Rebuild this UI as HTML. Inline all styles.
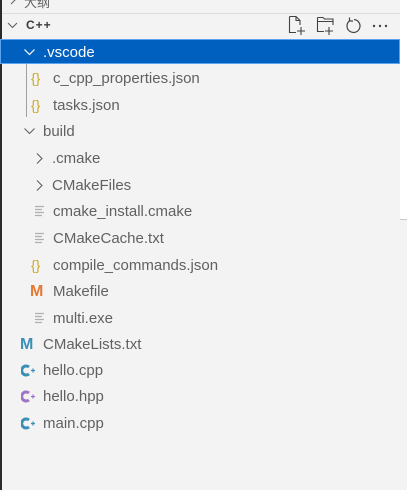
<!DOCTYPE html>
<html><head><meta charset="utf-8"><style>
*{margin:0;padding:0;box-sizing:border-box}
body{width:407px;height:490px;overflow:hidden;background:#f3f3f3;position:relative;font-family:"Segoe UI","Liberation Sans","Noto Sans CJK SC",sans-serif;color:#616161}
.r{position:absolute;left:0;width:400px;height:26px;font-size:15px;line-height:26px;white-space:nowrap}
.t{position:absolute;top:2px}
.ic{position:absolute;top:1px;font-size:14px;font-weight:normal}
svg{position:absolute}
</style></head><body>
<div style="position:absolute;left:0;top:0;width:2px;height:490px;background:#2b2b2b"></div>
<div style="position:absolute;left:400px;top:0;width:7px;height:219px;background:#fff"></div>
<div style="position:absolute;left:400px;top:219px;width:7px;height:1px;background:#c8c8c8"></div>
<div style="position:absolute;left:2px;top:13px;width:398px;height:1px;background:#dcdcdc"></div>
<div style="position:absolute;left:24px;top:-8px;font-size:13px;color:#616161">大纲</div>
<svg style="left:8px;top:-4px" width="12" height="10"><path d="M3 8 L8 3" stroke="#616161" fill="none"/></svg>
<svg style="left:7px;top:21px" width="12" height="10"><path d="M1 2 L5.5 6.5 L10 2" stroke="#616161" fill="none" stroke-width="1.1"/></svg>
<div style="position:absolute;left:26px;top:18px;font-size:12px;font-weight:bold;color:#3b3b3b;letter-spacing:1px">C++</div>
<svg style="left:288px;top:15px" width="20" height="22" fill="none" stroke="#424242" stroke-width="1.1"><path d="M1.5 1.5 H8 L12 5.5 V10 M8 1.5 V5.5 H12 M1.5 1.5 V17.5 H8"/><path d="M13 12 V20 M9 16 H17"/></svg>
<svg style="left:316px;top:15px" width="20" height="22" fill="none" stroke="#424242" stroke-width="1.1"><path d="M1.5 2.5 H7 L8.5 4 H17 V10 M1.5 2.5 V16.5 H8 M1.5 6.5 H17"/><path d="M13 12 V20 M9 16 H17"/></svg>
<svg style="left:345px;top:17px" width="18" height="18" fill="none" stroke="#424242" stroke-width="1.2"><path d="M5 3.5 A6.5 6.5 0 1 0 9 2.5"/><path d="M4.5 0.5 V4 H8"/></svg>
<svg style="left:372px;top:24px" width="18" height="4" fill="#424242"><circle cx="2" cy="2" r="1.2"/><circle cx="8" cy="2" r="1.2"/><circle cx="14" cy="2" r="1.2"/></svg>
<div class="r" style="top:39px;height:25px;background:#0060c0;border:1px solid #5aa3f0;color:#fff">
<svg style="left:22px;top:8px" width="14" height="10"><path d="M1.5 1.5 L6.5 6.5 L11.5 1.5" stroke="#fff" fill="none" stroke-width="1.2"/></svg>
<span class="t" style="left:42px;top:0px">.vscode</span></div>
<div style="position:absolute;left:26px;top:64px;width:1px;height:53px;background:#a0a0a0"></div>
<div class="r" style="top:64px"><span class="ic" style="left:31px;color:#c9a826">{}</span><span class="t" style="left:53px">c_cpp_properties.json</span></div>
<div class="r" style="top:91px"><span class="ic" style="left:31px;color:#c9a826">{}</span><span class="t" style="left:53px">tasks.json</span></div>
<div class="r" style="top:117px"><svg style="left:23px;top:10px" width="14" height="10"><path d="M1.5 1.5 L6.5 6.5 L11.5 1.5" stroke="#616161" fill="none" stroke-width="1.1"/></svg><span class="t" style="left:43px">build</span></div>
<div class="r" style="top:144px"><svg style="left:35px;top:8px" width="10" height="14"><path d="M2 1.5 L7 6.5 L2 11.5" stroke="#616161" fill="none" stroke-width="1.1"/></svg><span class="t" style="left:52px">.cmake</span></div>
<div class="r" style="top:171px"><svg style="left:35px;top:8px" width="10" height="14"><path d="M2 1.5 L7 6.5 L2 11.5" stroke="#616161" fill="none" stroke-width="1.1"/></svg><span class="t" style="left:52px">CMakeFiles</span></div>
<div class="r" style="top:197px"><svg style="left:34px;top:8px" width="12" height="12" stroke="#b0b0b0" stroke-width="1.2"><path d="M1 1.5H10M1 4.5H8M1 7.5H10M1 10.5H8"/></svg><span class="t" style="left:53px">cmake_install.cmake</span></div>
<div class="r" style="top:224px"><svg style="left:34px;top:8px" width="12" height="12" stroke="#b0b0b0" stroke-width="1.2"><path d="M1 1.5H10M1 4.5H8M1 7.5H10M1 10.5H8"/></svg><span class="t" style="left:53px">CMakeCache.txt</span></div>
<div class="r" style="top:251px"><span class="ic" style="left:31px;color:#c9a826">{}</span><span class="t" style="left:53px">compile_commands.json</span></div>
<div class="r" style="top:277px"><span class="ic" style="left:30px;top:2px;color:#e37933;font-size:16px;font-weight:900">M</span><span class="t" style="left:53px">Makefile</span></div>
<div class="r" style="top:304px"><svg style="left:34px;top:8px" width="12" height="12" stroke="#b0b0b0" stroke-width="1.2"><path d="M1 1.5H10M1 4.5H8M1 7.5H10M1 10.5H8"/></svg><span class="t" style="left:53px">multi.exe</span></div>
<div class="r" style="top:330px"><span class="ic" style="left:20px;top:2px;color:#3b8eb5;font-size:16px;font-weight:900">M</span><span class="t" style="left:43px">CMakeLists.txt</span></div>
<div class="r" style="top:356px"><svg style="left:21px;top:8px" width="16" height="13"><path d="M8 3 A4.5 4.5 0 1 0 8 10" stroke="#3b8eb5" stroke-width="3" fill="none"/><path d="M10 6.5h4M12 4.5v4" stroke="#3b8eb5" stroke-width="1.2"/></svg><span class="t" style="left:43px">hello.cpp</span></div>
<div class="r" style="top:382px"><svg style="left:21px;top:8px" width="16" height="13"><path d="M8 3 A4.5 4.5 0 1 0 8 10" stroke="#a074c4" stroke-width="3" fill="none"/><path d="M10 6.5h4M12 4.5v4" stroke="#a074c4" stroke-width="1.2"/></svg><span class="t" style="left:43px">hello.hpp</span></div>
<div class="r" style="top:409px"><svg style="left:21px;top:8px" width="16" height="13"><path d="M8 3 A4.5 4.5 0 1 0 8 10" stroke="#3b8eb5" stroke-width="3" fill="none"/><path d="M10 6.5h4M12 4.5v4" stroke="#3b8eb5" stroke-width="1.2"/></svg><span class="t" style="left:43px">main.cpp</span></div>
</body></html>
